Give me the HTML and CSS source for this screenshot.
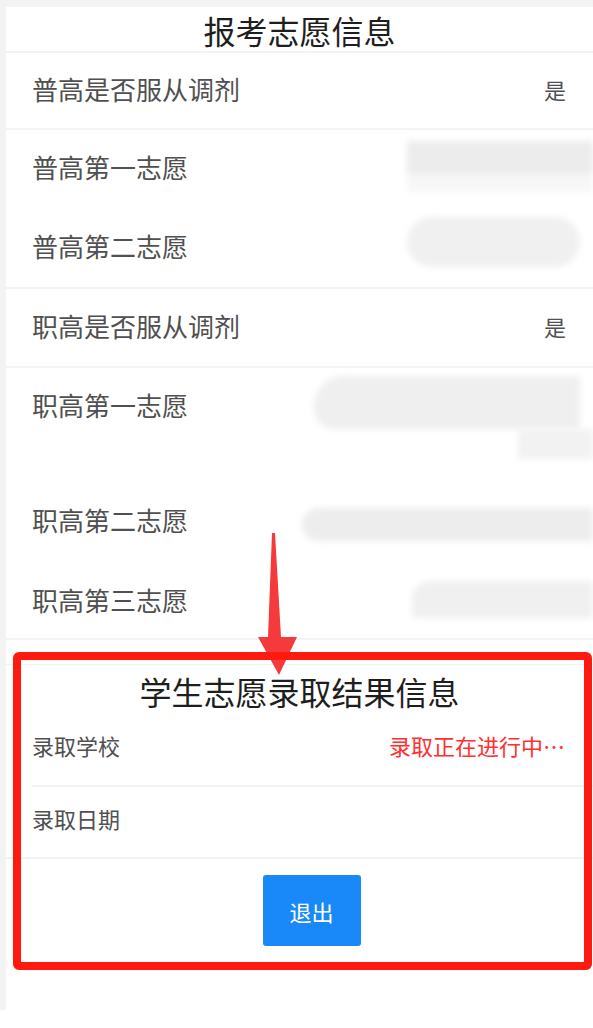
FILE: index.html
```html
<!DOCTYPE html>
<html lang="zh-CN">
<head>
<meta charset="utf-8">
<title>报考志愿信息</title>
<link rel="stylesheet" href="styles.css">
</head>
<body>
<div class="page">
  <div class="sheet">
    <section class="card">
      <h2 class="card-title">报考志愿信息</h2>
      <div class="group">
        <div class="row row-a"><span class="label">普高是否服从调剂</span><span class="value">是</span></div>
      </div>
      <div class="group">
        <div class="row row-b"><span class="label">普高第一志愿</span><span class="blur blur-p1"></span></div>
        <div class="row row-c"><span class="label">普高第二志愿</span><span class="blur blur-p2"></span></div>
      </div>
      <div class="group">
        <div class="row row-d"><span class="label">职高是否服从调剂</span><span class="value">是</span></div>
      </div>
      <div class="group">
        <div class="row row-e"><span class="label">职高第一志愿</span>
          <span class="blur-stack"><span class="blur blur-z1a"></span><span class="blur blur-z1b"></span></span>
        </div>
        <div class="row row-f"><span class="label">职高第二志愿</span><span class="blur blur-z2"></span></div>
        <div class="row row-g"><span class="label">职高第三志愿</span><span class="blur blur-z3"></span></div>
      </div>
    </section>

    <section class="card card-result">
      <h2 class="card-title result-title">学生志愿录取结果信息</h2>
      <div class="row row-s row-school"><span class="label small">录取学校</span><span class="value status">录取正在进行中…</span></div>
      <div class="row row-s row-date"><span class="label small">录取日期</span><span class="value"></span></div>
      <div class="actions"><button class="btn-exit" type="button">退出</button></div>
    </section>
  </div>

  <svg class="arrow" width="60" height="150" viewBox="0 0 60 150" aria-hidden="true">
    <polygon points="22,3 25,3 31,107 47,107 29,145 8,107 18,107" fill="#f43a3a"/>
  </svg>
  <div class="highlight"></div>
</div>
</body>
</html>
```

FILE: styles.css
```css
* { box-sizing: border-box; }
html, body { margin: 0; padding: 0; background: #ffffff; }
body {
  font-family: "Noto Sans CJK SC", "Noto Sans", sans-serif;
  width: 593px;
}
.page {
  position: relative;
  display: flex;
  flex-direction: column;
  background: #f3f3f3;
  padding: 7px 0 0 6px;
  height: 1010px;
}
.sheet {
  flex: 1;
  background: #ffffff;
}
.card {
  background: #ffffff;
}
.card-title {
  margin: 0;
  height: 46px;
  font-size: 32px;
  font-weight: 400;
  line-height: 46px;
  color: #1e1e1e;
  text-align: center;
  border-bottom: 2px solid #f2f3f5;
}
.group { border-bottom: 2px solid #f2f3f5; }
.row {
  display: flex;
  justify-content: space-between;
  align-items: center;
  padding: 0 27px 0 26px;
  overflow: hidden;
}
.label {
  font-size: 26px;
  line-height: 36px;
  color: #505050;
  white-space: nowrap;
}
.value {
  font-size: 22px;
  line-height: 32px;
  color: #505050;
}
.row-a { height: 75px; padding-bottom: 4px; }
.row-b { height: 78px; padding-bottom: 4px; }
.row-c { height: 79px; padding-bottom: 4px; }
.row-d { height: 77px; padding-bottom: 4px; }
.row-e { height: 115px; align-items: flex-start; padding-top: 19px; }
.row-f { height: 78px; padding-bottom: 4px; }
.row-g { height: 77px; }

.blur {
  display: block;
  background: #ededed;
  filter: blur(3px);
  margin-right: -27px;
}
.blur-p1 {
  width: 186px; height: 51px;
  background: linear-gradient(#ececec 0, #ececec 64%, #f7f7f7 64%, #f7f7f7 100%);
  margin-top: -2px;
}
.blur-p2 {
  width: 173px; height: 50px;
  border-radius: 25px;
  background: #f0f0f0;
  margin-right: -14px;
  margin-top: -8px;
}
.blur-stack {
  display: flex;
  flex-direction: column;
  align-items: flex-end;
  margin-top: -11px;
  margin-right: -27px;
}
.blur-stack .blur { margin-right: 0; }
.blur-z1a {
  width: 266px; height: 53px;
  border-radius: 30px 0 0 20px;
  background: #efefef;
  margin-right: 13px !important;
}
.blur-z1b { width: 75px; height: 30px; background: #f2f2f2; }
.blur-z2 {
  width: 291px; height: 33px;
  border-radius: 16px 0 0 16px;
  background: #ededed;
  margin-top: 8px;
}
.blur-z3 {
  width: 181px; height: 37px;
  border-radius: 18px 0 0 4px;
  background: #f0f0f0;
}

.card-result {
  margin-top: 24px;
  border-top: 1px solid #f2f3f5;
}
.result-title {
  height: 53px;
  line-height: 52px;
  border-bottom: none;
}
.row-s {
  position: relative;
  align-items: flex-start;
  padding: 0 28px 0 26px;
}
.row-school { height: 69px; padding-top: 11px; }
.row-date { height: 72px; padding-top: 15px; }
.label.small { font-size: 22px; line-height: 32px; color: #505050; }
.row-s::after {
  content: "";
  position: absolute;
  left: 26px; right: 0; bottom: 0;
  border-bottom: 2px solid #f2f3f5;
}
.row-date::after { left: 0; }
.status { color: #ff3030; font-size: 22px; }
.actions {
  display: flex;
  justify-content: center;
  padding: 16px 0 0 0;
}
.btn-exit {
  width: 98px;
  height: 71px;
  border: none;
  border-radius: 3px;
  background: #1989fa;
  color: #ffffff;
  font-family: inherit;
  font-size: 22px;
  margin-left: 24px;
}

.arrow {
  position: absolute;
  left: 250px;
  top: 530px;
}
.highlight {
  position: absolute;
  left: 13px;
  top: 652px;
  width: 579px;
  height: 318px;
  border: 8px solid #ff1a10;
  border-radius: 6px;
  pointer-events: none;
}
```
